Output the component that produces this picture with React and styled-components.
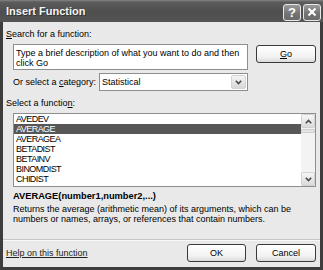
import React from "react"
import styled, { createGlobalStyle } from "styled-components"

const GlobalStyle = createGlobalStyle`
  html, body {
    margin: 0;
    padding: 0;
    background: #ffffff;
  }
  body {
    font-family: "Liberation Sans", Arial, sans-serif;
    font-size: 9px;
    color: #000;
  }
`

const Window = styled.div`
  width: 323px;
  height: 270px;
  display: flex;
  flex-direction: column;
  background: #3d3d3d;
  overflow: hidden;
`

const TitleBar = styled.div`
  height: 22px;
  flex: none;
  display: flex;
  align-items: center;
  padding: 0 2px 0 6px;
  background: linear-gradient(#858585 0, #5c5c5c 2px, #4e4e4e 55%, #555555 100%);
`

const Title = styled.span`
  flex: 1;
  color: #f4f4f4;
  font-size: 11px;
  font-weight: bold;
  text-shadow: 1px 1px 0 #333;
`

const CaptionButtons = styled.div`
  display: flex;
  gap: 2px;
  margin-top: 2px;
`

const CaptionButton = styled.div`
  width: 18px;
  height: 17px;
  box-sizing: border-box;
  border: 1px solid #e8e8e8;
  border-radius: 3px;
  background: linear-gradient(#9a9a9a, #737373 60%, #6a6a6a);
  display: flex;
  align-items: center;
  justify-content: center;
  color: #fff;
  font-weight: bold;
  font-size: 13px;
  line-height: 1;
`

const Body = styled.div`
  flex: 1;
  margin: 0 3px 3px;
  background: #e9e9e9;
  display: flex;
  flex-direction: column;
  padding: 7px 4px 0 3px;
`

const Label = styled.div`
  line-height: 10px;
  margin-top: ${p => p.$top || 0}px;
  margin-left: ${p => p.$indent || 0}px;
  width: ${p => (p.$width ? `${p.$width}px` : "auto")};
  flex: none;
  white-space: nowrap;
`

const Key = styled.span`
  text-decoration: underline;
`

const Row = styled.div`
  display: flex;
  align-items: ${p => p.$align || "center"};
  gap: ${p => p.$gap || 0}px;
  margin-top: ${p => p.$top || 0}px;
  margin-left: ${p => p.$indent || 0}px;
`

const SearchBox = styled.div`
  width: 235px;
  height: 26px;
  box-sizing: border-box;
  border: 1px solid #8e8e8e;
  background: #fff;
  padding: 3px 2px 0;
  line-height: 10px;
`

const Button = styled.div`
  width: ${p => p.$width || 59}px;
  height: 18px;
  box-sizing: border-box;
  margin-top: ${p => p.$top || 0}px;
  border: 1px solid #3a3a3a;
  border-radius: 3px;
  background: linear-gradient(#ffffff, #f2f2f2 70%, #d9d9d9);
  display: flex;
  align-items: center;
  justify-content: center;
`

const Select = styled.div`
  width: 149px;
  height: 18px;
  box-sizing: border-box;
  border: 1px solid #8e8e8e;
  background: #fff;
  display: flex;
  align-items: center;
  padding: 1px 1px 1px 2px;
`

const SelectValue = styled.span`
  flex: 1;
`

const DropButton = styled.div`
  width: 15px;
  height: 100%;
  box-sizing: border-box;
  border: 1px solid #d4d4d4;
  border-radius: 2px;
  background: linear-gradient(#f4f4f4, #d8d8d8);
  display: flex;
  align-items: center;
  justify-content: center;
`

const ListBox = styled.div`
  width: 303px;
  height: 74px;
  box-sizing: border-box;
  margin: 5px 0 0 7px;
  border: 1px solid #8e8e8e;
  background: #fff;
  display: flex;
`

const Items = styled.div`
  flex: 1;
  display: flex;
  flex-direction: column;
`

const Item = styled.div`
  height: 10px;
  line-height: 10px;
  padding-left: 2px;
  font-size: 9px;
  letter-spacing: -0.55px;
  background: ${p => (p.$selected ? "#575757" : "transparent")};
  color: ${p => (p.$selected ? "#fff" : "#000")};
`

const ScrollBar = styled.div`
  width: 14px;
  display: flex;
  flex-direction: column;
  background: #f3f3f3;
`

const ScrollButton = styled.div`
  height: 14px;
  box-sizing: border-box;
  border: 1px solid #d2d2d2;
  border-radius: 2px;
  background: linear-gradient(#f6f6f6, #dadada);
  display: flex;
  align-items: center;
  justify-content: center;
`

const Thumb = styled.div`
  height: 4px;
  margin-top: 1px;
  box-sizing: border-box;
  border: 1px solid #cfcfcf;
  border-radius: 1px;
  background: #e4e4e4;
`

const Track = styled.div`
  flex: 1;
`

const Signature = styled.div`
  margin: 4px 0 0 7px;
  font-weight: bold;
  font-size: 9.3px;
  line-height: 10px;
`

const Description = styled.div`
  margin: 3px 0 0 7px;
  line-height: 10px;
`

const Separator = styled.div`
  margin: auto -4px 0 -3px;
  height: 1px;
  background: #c6c6c6;
  border-bottom: 1px solid #f8f8f8;
`

const Footer = styled.div`
  display: flex;
  align-items: center;
  gap: 10px;
  padding: 3px 0 5px;
`

const HelpLink = styled.span`
  flex: 1;
  text-decoration: underline;
  color: #222;
`

const Chevron = ({ up }) => (
  <svg width="7" height="5" viewBox="0 0 7 5">
    <path
      d={up ? "M0.8 4.2 L3.5 1.4 L6.2 4.2" : "M0.8 0.8 L3.5 3.6 L6.2 0.8"}
      fill="none"
      stroke="#4a4a4a"
      strokeWidth="1.6"
    />
  </svg>
)

const CloseGlyph = () => (
  <svg width="10" height="10" viewBox="0 0 10 10">
    <path d="M1.5 1.5 L8.5 8.5 M8.5 1.5 L1.5 8.5" stroke="#fff" strokeWidth="2" />
  </svg>
)

const functions = ["AVEDEV", "AVERAGE", "AVERAGEA", "BETADIST", "BETAINV", "BINOMDIST", "CHIDIST"]

export default function App() {
  return (
    <>
      <GlobalStyle />
      <Window>
        <TitleBar>
          <Title>Insert Function</Title>
          <CaptionButtons>
            <CaptionButton>?</CaptionButton>
            <CaptionButton>
              <CloseGlyph />
            </CaptionButton>
          </CaptionButtons>
        </TitleBar>
        <Body>
          <Label>
            <Key>S</Key>earch for a function:
          </Label>
          <Row $align="flex-start" $gap={8} $top={5} $indent={7}>
            <SearchBox>
              Type a brief description of what you want to do and then click Go
            </SearchBox>
            <Button $width={60} $top={1}>
              <Key>G</Key>o
            </Button>
          </Row>
          <Row $top={3} $indent={7}>
            <Label $width={86}>
              Or select a <Key>c</Key>ategory:
            </Label>
            <Select>
              <SelectValue>Statistical</SelectValue>
              <DropButton>
                <Chevron />
              </DropButton>
            </Select>
          </Row>
          <Label $top={7}>
            Select a functio<Key>n</Key>:
          </Label>
          <ListBox>
            <Items>
              {functions.map(name => (
                <Item key={name} $selected={name === "AVERAGE"}>
                  {name}
                </Item>
              ))}
            </Items>
            <ScrollBar>
              <ScrollButton>
                <Chevron up />
              </ScrollButton>
              <Thumb />
              <Track />
              <ScrollButton>
                <Chevron />
              </ScrollButton>
            </ScrollBar>
          </ListBox>
          <Signature>AVERAGE(number1,number2,...)</Signature>
          <Description>
            Returns the average (arithmetic mean) of its arguments, which can be
            <br />
            numbers or names, arrays, or references that contain numbers.
          </Description>
          <Separator />
          <Footer>
            <HelpLink>Help on this function</HelpLink>
            <Button>OK</Button>
            <Button $width={60}>Cancel</Button>
          </Footer>
        </Body>
      </Window>
    </>
  )
}
